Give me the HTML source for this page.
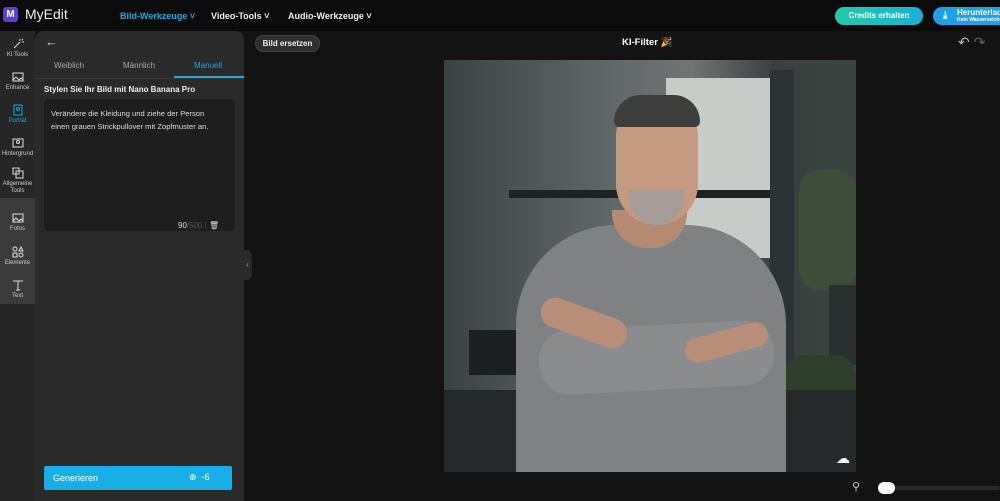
<!DOCTYPE html>
<html><head><meta charset="utf-8"><style>
*{margin:0;padding:0;box-sizing:border-box}
body{width:1000px;height:501px;background:#131313;font-family:"Liberation Sans",sans-serif;color:#ddd;position:relative;overflow:hidden}
.a{position:absolute}
.hdr{left:0;top:0;width:1000px;height:31px;background:#0b0b0b}
.nav{font-size:9px;font-weight:bold;top:11px}
.side{left:0;top:31px;width:35px;height:470px;background:#262626}
.si{position:absolute;left:0;width:35px;text-align:center;font-size:6px;color:#ccc}
.si svg{display:block;margin:0 auto 2px}
.panel{left:35px;top:31px;width:209px;height:470px;background:#2a2a2a;border-radius:8px 8px 0 0}
</style></head><body>
<div class="a hdr"></div>
<div class="a" style="left:3px;top:7px;width:15px;height:15px;background:#5b3fd6;border-radius:3px;color:#fff;font-size:10px;font-weight:bold;text-align:center;line-height:15px">M</div>
<div class="a" style="left:25px;top:6px;font-size:14px;color:#eee">MyEdit</div>
<div class="a nav" style="left:120px;color:#1ea8e8">Bild-Werkzeuge ˅</div>
<div class="a nav" style="left:211px;color:#eee">Video-Tools ˅</div>
<div class="a nav" style="left:288px;color:#eee">Audio-Werkzeuge ˅</div>
<div class="a" style="left:835px;top:7px;width:88px;height:18px;border-radius:9px;background:linear-gradient(90deg,#22c9a9,#1bb0d8);color:#fff;font-size:8px;font-weight:bold;text-align:center;line-height:18px">Credits erhalten</div>
<div class="a" style="left:933px;top:7px;width:80px;height:18px;border-radius:9px;background:#1ea2e6;color:#fff;font-weight:bold">
<span class="a" style="left:10px;top:3px;font-size:10px">⤓</span>
<span class="a" style="left:24px;top:1px;font-size:8px">Herunterlad</span>
<span class="a" style="left:24px;top:10px;font-size:5px">Kein Wasserzeichen</span></div>

<div class="a side"></div>
<div class="a" style="left:0;top:198px;width:35px;height:106px;background:#3a3a3a"></div>
<div class="si" style="top:38px"><svg width="12" height="12" viewBox="0 0 12 12" fill="none" stroke="#ddd"><path d="M2 10l6-6M8 1v2M10 4h2M10 1l1 1"/></svg>KI Tools</div>
<div class="si" style="top:71px"><svg width="12" height="12" viewBox="0 0 12 12" fill="none" stroke="#ddd"><rect x="1" y="2" width="10" height="8"/><path d="M1 9l3-3 3 3 2-2 2 2"/></svg>Enhance</div>
<div class="si" style="top:104px;color:#1ea8e8"><svg width="12" height="12" viewBox="0 0 12 12" fill="none" stroke="#1ea8e8"><rect x="2" y="1" width="8" height="10"/><circle cx="6" cy="5" r="1.5"/></svg>Porträt</div>
<div class="si" style="top:137px"><svg width="12" height="12" viewBox="0 0 12 12" fill="none" stroke="#ddd"><rect x="1" y="2" width="10" height="8"/><circle cx="6" cy="5" r="1.5"/></svg>Hintergrund</div>
<div class="si" style="top:167px;line-height:7px"><svg width="12" height="12" viewBox="0 0 12 12" fill="none" stroke="#ddd"><rect x="1" y="1" width="6" height="6"/><rect x="4" y="4" width="7" height="7"/></svg>Allgemeine<br>Tools</div>
<div class="si" style="top:212px"><svg width="12" height="12" viewBox="0 0 12 12" fill="none" stroke="#ddd"><rect x="1" y="2" width="10" height="8"/><path d="M1 9l3-3 3 3 2-2 2 2"/></svg>Fotos</div>
<div class="si" style="top:246px"><svg width="12" height="12" viewBox="0 0 12 12" fill="none" stroke="#ddd"><circle cx="3" cy="3" r="2"/><path d="M9 1l2 4H7z"/><rect x="1" y="7" width="4" height="4"/><circle cx="9" cy="9" r="2"/></svg>Elemente</div>
<div class="si" style="top:279px"><svg width="12" height="12" viewBox="0 0 12 12" fill="none" stroke="#ddd"><path d="M1 2h10M6 2v9M4 11h4"/></svg>Text</div>

<div class="a panel"></div>
<div class="a" style="left:45px;top:34px;font-size:13px;color:#ccc">←</div>
<div class="a" style="left:54px;top:61px;font-size:8px;color:#aaa">Weiblich</div>
<div class="a" style="left:123px;top:61px;font-size:8px;color:#aaa">Männlich</div>
<div class="a" style="left:194px;top:61px;font-size:8px;color:#1ea8e8">Manuell</div>
<div class="a" style="left:174px;top:76px;width:70px;height:2px;background:#1ea8e8"></div>
<div class="a" style="left:35px;top:78px;width:209px;height:1px;background:#383838"></div>
<div class="a" style="left:44px;top:85px;font-size:8px;font-weight:bold;color:#eee">Stylen Sie Ihr Bild mit Nano Banana Pro</div>
<div class="a" style="left:44px;top:99px;width:191px;height:132px;background:#1e1e1f;border-radius:4px"></div>
<div class="a" style="left:51px;top:107px;font-size:7.6px;line-height:13px;color:#ddd">Verändere die Kleidung und ziehe der Person<br>einen grauen Strickpullover mit Zopfmuster an.</div>
<div class="a" style="left:178px;top:221px;font-size:8px;color:#ddd">90<span style="color:#555">/500</span> <span style="color:#555">|</span> 🗑</div>
<div class="a" style="left:243px;top:250px;width:9px;height:30px;background:#2a2a2a;border-radius:0 6px 6px 0;font-size:8px;text-align:center;line-height:30px;color:#aaa">‹</div>
<div class="a" style="left:44px;top:466px;width:188px;height:24px;background:#1aafe4;border-radius:2px;color:#fff;font-size:9px">
<span class="a" style="left:9px;top:7px">Generieren</span><span class="a" style="left:145px;top:6px;font-size:9px">⊕ &nbsp;-6</span></div>

<div class="a" style="left:255px;top:35px;width:65px;height:17px;border-radius:9px;background:#2f2f2f;border:1px solid #444;font-size:8px;font-weight:bold;color:#eee;text-align:center;line-height:15px">Bild ersetzen</div>
<div class="a" style="left:622px;top:37px;font-size:9.5px;font-weight:bold;color:#fff">KI-Filter 🎉</div>
<div class="a" style="left:958px;top:34px;font-size:14px;color:#bbb">↶ <span style="color:#666">↷</span></div>

<div class="a" style="left:444px;top:60px;width:412px;height:412px;overflow:hidden;background:linear-gradient(90deg,#3a4143 0%,#4d5556 20%,#646b6b 45%,#707573 60%,#3a4040 80%,#3b4540 100%)">
<div class="a" style="left:222px;top:18px;width:105px;height:180px;background:#c8ccc8"></div>
<div class="a" style="left:65px;top:130px;width:265px;height:8px;background:#1e2222"></div>
<div class="a" style="left:326px;top:10px;width:24px;height:320px;background:#2c3334"></div>
<div class="a" style="left:355px;top:110px;width:57px;height:120px;background:#3d4d38;border-radius:20px"></div>
<div class="a" style="left:385px;top:225px;width:27px;height:80px;background:#2a3030"></div>
<div class="a" style="left:340px;top:295px;width:72px;height:70px;background:#2e3f2a;border-radius:20px"></div>
<div class="a" style="left:0;top:330px;width:412px;height:82px;background:#25292a"></div>
<div class="a" style="left:25px;top:270px;width:50px;height:45px;background:#1c1e1f"></div>
<div class="a" style="left:72px;top:165px;width:270px;height:260px;background:#7f8182;border-radius:100px 100px 10px 10px"></div>
<div class="a" style="left:95px;top:265px;width:235px;height:65px;background:#8a8c8d;border-radius:30px;transform:rotate(-3deg)"></div>
<div class="a" style="left:95px;top:248px;width:90px;height:30px;background:#b78f78;border-radius:15px;transform:rotate(20deg)"></div>
<div class="a" style="left:240px;top:270px;width:85px;height:25px;background:#b78f78;border-radius:12px;transform:rotate(-15deg)"></div>
<div class="a" style="left:168px;top:150px;width:75px;height:38px;background:#b38a72;border-radius:0 0 35px 35px"></div>
<div class="a" style="left:172px;top:40px;width:82px;height:125px;background:#c49a80;border-radius:40px 40px 45px 45px"></div>
<div class="a" style="left:170px;top:35px;width:86px;height:32px;background:#3d3d3c;border-radius:40px 40px 8px 8px"></div>
<div class="a" style="left:185px;top:130px;width:55px;height:35px;background:#a59d96;border-radius:0 0 28px 28px"></div>
<div class="a" style="left:392px;top:390px;font-size:14px;color:#fff">☁</div>
</div>
<div class="a" style="left:852px;top:480px;font-size:11px;color:#ccc">⚲</div>
<div class="a" style="left:880px;top:486px;width:120px;height:4px;background:#2a2a2a;border-radius:2px"></div>
<div class="a" style="left:878px;top:482px;width:17px;height:12px;background:#fff;border-radius:6px"></div>
</body></html>
